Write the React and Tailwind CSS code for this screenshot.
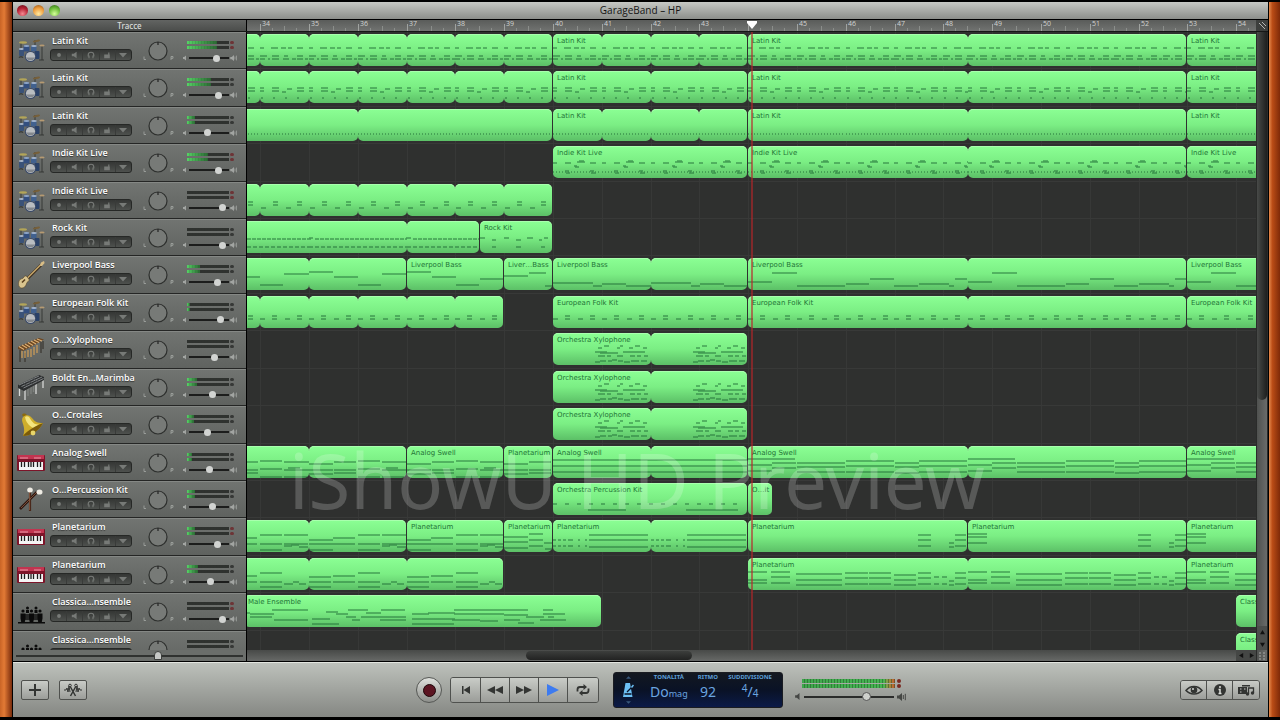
import React, { useState } from "react";
import clsx from "clsx";

const BAR_WIDTH = 48.8;
const FIRST_BAR = 33.73;
const PLAYHEAD = 44.07;

const xOf = (bar) => Math.round((bar - FIRST_BAR) * BAR_WIDTH);

const every = (step, total, y, w, from = 0) => {
  const out = [];
  for (let x = from; x < total; x += step) out.push([x, y, w]);
  return out;
};

const stack = (x, w, ys) => ys.map((y) => [x, y, w]);

// notes are [x, y, width]; a pattern repeats after `period` bars
const PATTERNS = {
  latinA: {
    period: 1,
    notes: [
      [0, 14, 4], [11, 14, 7], [21, 14, 5], [28, 14, 4], [37, 14, 6],
      [0, 22, 7], [12, 22, 7], [24, 22, 4], [37, 22, 6],
      [0, 25, 5], [8, 25, 2], [12, 25, 7], [23, 25, 6], [32, 25, 4], [37, 25, 6], [45, 25, 3],
    ],
  },
  latinB: {
    period: 1,
    notes: [
      ...stack(0, 4, [17, 20]),
      ...stack(12, 7, [17, 20]),
      [22, 21, 4],
      [27, 18, 5],
      ...stack(37, 7, [17, 20]),
      ...every(12, 48, 27, 2, 1),
    ],
  },
  latinC: { period: 1, notes: every(3, 48, 25, 1) },
  indie: {
    period: 1,
    notes: [
      [0, 17, 4], [12, 17, 6], [37, 17, 6], [24, 16, 8], [26, 15, 5],
      [21, 20, 3], [22, 21, 4],
      ...every(3, 48, 26, 1),
      [12, 25, 4], [13, 27, 4], [37, 25, 4], [38, 27, 5],
    ],
  },
  indieB: { period: 1, notes: [[1, 24, 5], ...stack(13, 5, [18, 21]), [26, 24, 5], ...stack(37, 5, [18, 21])] },
  folk: { period: 1, notes: [[0, 23, 5], ...stack(12, 5, [20, 23]), [25, 23, 5], ...stack(37, 5, [20, 23])] },
  rock: { period: 2, notes: [[0, 17, 4], ...every(5, 97, 18, 4, 6), ...every(6, 97, 26, 4)] },
  rockFill: {
    period: 1.5,
    notes: [[0, 17, 5], [12, 19, 4], [24, 17, 5], [36, 19, 5], [47, 17, 6], [59, 19, 3], [64, 17, 4], [12, 26, 4], [36, 26, 5], [61, 26, 4]],
  },
  bass: { period: 2, notes: [[0, 14, 24], [25, 19, 24], [49, 27, 23], [73, 16, 25]] },
  bassTurn: { period: 2, notes: [[0, 14, 24], [25, 19, 24], [49, 27, 23], [73, 21, 25]] },
  bassEnd: { period: 1, notes: [[0, 18, 24], [25, 15, 17], [41, 28, 7]] },
  bassLow: { period: 2, notes: [[0, 25, 40], [40, 28, 9], [49, 26, 24], [73, 28, 25]] },
  bassLong: {
    period: 4.5,
    notes: [
      [0, 24, 24], [24, 15, 25], [49, 28, 48], [98, 26, 23], [122, 21, 24],
      [146, 28, 24], [171, 26, 30], [201, 28, 5], [207, 21, 12],
    ],
  },
  xylo: {
    period: 2,
    notes: [
      [45, 15, 4], [51, 13, 5], [64, 15, 3], [67, 13, 3], [76, 15, 4], [82, 13, 5], [90, 15, 4],
      [42, 19, 12], [47, 20, 18], [70, 19, 22],
      [45, 23, 7], [54, 23, 4], [64, 23, 6], [77, 23, 5], [84, 23, 4], [91, 23, 4],
      [42, 29, 5], [47, 28, 6], [55, 28, 4], [59, 27, 5], [65, 28, 5], [71, 29, 6], [78, 28, 8], [88, 28, 6],
    ],
  },
  swell: {
    period: 2,
    notes: [
      ...stack(0, 24, [18, 24, 28]),
      ...stack(25, 22, [16, 24, 27]),
      ...stack(49, 22, [15, 23, 31]),
      ...stack(73, 25, [16, 24, 31]),
      [77, 22, 12],
    ],
  },
  swellFull: { period: 2, notes: stack(0, 98, [14, 20, 26]) },
  swellLong: {
    period: 4.5,
    notes: [
      ...stack(0, 47, [13]), ...stack(0, 24, [19, 25]), ...stack(24, 24, [17, 22]),
      ...stack(49, 48, [17, 21, 26]), ...stack(98, 48, [15, 20, 26]), ...stack(147, 24, [17, 21, 27]),
      ...stack(171, 48, [15, 20, 26]),
    ],
  },
  perc: { period: 4.5, notes: [...every(12, 190, 21, 4), [35, 27, 38], [133, 27, 52]] },
  planet: {
    period: 2,
    notes: [
      ...stack(0, 24, [20, 24, 30]),
      ...stack(24, 22, [18, 24]),
      ...stack(49, 22, [15, 24, 30]),
      ...stack(73, 24, [15, 24]),
      [73, 26, 8], [80, 25, 8], [88, 27, 9],
    ],
  },
  planetB: {
    period: 2,
    notes: [
      ...stack(0, 22, [19, 24, 29]),
      ...stack(24, 22, [18, 24]),
      ...stack(49, 22, [15, 24, 29]),
      [73, 26, 9], [82, 24, 6], [88, 26, 7],
    ],
  },
  planetShort: { period: 1, notes: [...stack(0, 24, [17, 22, 28]), ...stack(25, 14, [14, 20, 26]), [40, 23, 8], [41, 29, 7]] },
  planetDots: {
    period: 2,
    notes: [...every(5, 16, 20, 3), ...every(7, 34, 20, 2, 18), ...every(5, 16, 26, 3), ...every(7, 34, 26, 2, 18), ...stack(36, 59, [15, 20, 27])],
  },
  planetTail: { period: 4.5, notes: [...stack(170, 13, [15, 20, 26]), ...stack(201, 5, [23, 27]), ...stack(207, 11, [15, 20, 26])] },
  planetHeadTail: {
    period: 4.5,
    notes: [...stack(0, 19, [14, 17, 23]), ...stack(170, 13, [15, 20, 26]), ...stack(201, 5, [23, 27]), ...stack(207, 11, [15, 20, 26])],
  },
  planetLong: {
    period: 4.5,
    notes: [
      ...stack(0, 19, [14, 22, 25]), ...stack(23, 19, [14, 19, 25]), ...stack(48, 46, [16, 22, 27]),
      ...stack(97, 23, [15, 20, 26]), ...stack(121, 22, [15, 20, 26]), ...stack(146, 22, [17, 22, 27]),
      ...stack(170, 13, [15, 20, 26]), ...stack(186, 5, [19, 26]), ...stack(194, 5, [19, 26]),
      ...stack(201, 5, [23, 27]), ...stack(207, 11, [15, 20, 26]),
    ],
  },
  male: {
    period: 8,
    notes: [
      [0, 18, 6], [6, 19, 24], [28, 15, 36], [6, 22, 22], [30, 25, 34],
      [68, 29, 27], [68, 24, 18], [82, 17, 12], [92, 19, 12], [104, 15, 20], [102, 22, 10], [108, 25, 8],
      [117, 22, 20], [122, 18, 15], [137, 15, 24], [136, 22, 26], [136, 25, 26],
      [168, 19, 17], [184, 18, 27], [168, 24, 43], [168, 29, 42],
      [210, 15, 74], [210, 19, 50], [208, 25, 28], [236, 26, 18], [260, 20, 24], [260, 25, 16], [274, 28, 16],
      [282, 22, 18], [299, 15, 10], [299, 19, 22], [296, 25, 26], [304, 22, 6],
    ],
  },
  blank: { period: 1, notes: [] },
};

const r = (start, end, loop, pattern, label) => ({ start, end, loop, pattern, label });

const drumLane = (label, pattern, midLoop) => [
  r(32, 40, pattern === "latinC" ? 4 : 1, pattern, ""),
  r(40, 44, midLoop, pattern, label),
  r(44, 53, 4.5, pattern, label),
  r(53, 56, 3, pattern, label),
];

const TRACKS = [
  { name: "Latin Kit", icon: "drums", volume: 74, level: 72, clip: true, regions: drumLane("Latin Kit", "latinA", 1) },
  { name: "Latin Kit", icon: "drums", volume: 80, level: 56, regions: drumLane("Latin Kit", "latinB", 2) },
  { name: "Latin Kit", icon: "drums", volume: 46, level: 20, regions: drumLane("Latin Kit", "latinC", 1) },
  { name: "Indie Kit Live", icon: "drums", volume: 80, level: 50, clip: true, regions: drumLane("Indie Kit Live", "indie", 4).slice(1) },
  { name: "Indie Kit Live", icon: "drums", volume: 92, level: 0, clip: true, regions: [r(32, 40, 1, "indieB", "")] },
  {
    name: "Rock Kit", icon: "drums", volume: 92, level: 0,
    regions: [r(33, 38.5, 4, "rock", ""), r(38.5, 40, 2, "rockFill", "Rock Kit")],
  },
  {
    name: "Liverpool Bass", icon: "bass", volume: 77, level: 32,
    regions: [
      r(33, 37, 2, "bass", ""),
      r(37, 39, 2, "bassTurn", "Liverpool Bass"),
      r(39, 40, 1, "bassEnd", "Liver…Bass"),
      r(40, 44, 2, "bassLow", "Liverpool Bass"),
      r(44, 53, 4.5, "bassLong", "Liverpool Bass"),
      r(53, 56, 3, "bassLong", "Liverpool Bass"),
    ],
  },
  {
    name: "European Folk Kit", icon: "drums", volume: 86, level: 8,
    regions: [
      r(32, 39, 1, "folk", ""),
      r(40, 44, 4, "folk", "European Folk Kit"),
      r(44, 53, 4.5, "folk", "European Folk Kit"),
      r(53, 56, 3, "folk", "European Folk Kit"),
    ],
  },
  { name: "O…Xylophone", icon: "xylophone", volume: 68, level: 0, regions: [r(40, 44, 2, "xylo", "Orchestra Xylophone")] },
  { name: "Boldt En…Marimba", icon: "marimba", volume: 60, level: 24, regions: [r(40, 44, 2, "xylo", "Orchestra Xylophone")] },
  { name: "O…Crotales", icon: "bell", volume: 46, level: 16, regions: [r(40, 44, 2, "xylo", "Orchestra Xylophone")] },
  {
    name: "Analog Swell", icon: "keys", volume: 53, level: 12,
    regions: [
      r(33, 37, 2, "swell", ""),
      r(37, 39, 2, "swell", "Analog Swell"),
      r(39, 40, 1, "swell", "Planetarium"),
      r(40, 44, 2, "swellFull", "Analog Swell"),
      r(44, 53, 4.5, "swellLong", "Analog Swell"),
      r(53, 56, 3, "swellLong", "Analog Swell"),
    ],
  },
  {
    name: "O…Percussion Kit", icon: "mallets", volume: 60, level: 18,
    regions: [r(40, 44, 4, "perc", "Orchestra Percussion Kit"), r(44, 44.5, 1, "blank", "O…it")],
  },
  {
    name: "Planetarium", icon: "keys", volume: 77, level: 20, clip: true,
    regions: [
      r(33, 37, 2, "planet", ""),
      r(37, 39, 2, "planet", "Planetarium"),
      r(39, 40, 1, "planetShort", "Planetarium"),
      r(40, 44, 2, "planetDots", "Planetarium"),
      r(44, 48.5, 4.5, "planetTail", "Planetarium"),
      r(48.5, 53, 4.5, "planetHeadTail", "Planetarium"),
      r(53, 56, 3, "planetHeadTail", "Planetarium"),
    ],
  },
  {
    name: "Planetarium", icon: "keys", volume: 56, level: 26,
    regions: [r(33, 39, 2, "planetB", ""), r(44, 53, 4.5, "planetLong", "Planetarium"), r(53, 56, 3, "planetLong", "Planetarium")],
  },
  {
    name: "Classica…nsemble", icon: "choir", volume: 92, level: 0, clip: true,
    regions: [r(33.67, 41, 8, "male", "Male Ensemble"), r(54, 56, 2, "blank", "Classical Ensemble")],
  },
  { name: "Classica…nsemble", icon: "choir", volume: 92, level: 0, regions: [r(54, 56, 2, "blank", "Classical Ensemble")] },
];

const TrackIcon = ({ type }) => {
  switch (type) {
    case "bass":
      return (
        <svg viewBox="0 0 28 28" className="w-7 h-7">
          <path d="M9 19 24 4" stroke="#3b2c1c" strokeWidth="3" />
          <path d="M9 18.5 24.5 3" stroke="#c9a96c" strokeWidth="1.4" />
          <path d="M23 5l1-3.5 3-1.5.6 2-2.6 3z" fill="#d8bd86" />
          <path d="M2 20c1-3 4-1.500 5-4 1-2 3-1 3.500.5s2 1 1.500 3c-.6 1.500-2 1-2.500 3-.6 3-3 5-5.500 4.500S1 23 2 20z" fill="#d9c48e" stroke="#5b4626" strokeWidth=".6" />
          <path d="M5 21.500l3-3" stroke="#5a3e1c" strokeWidth="1.600" />
        </svg>
      );
    case "xylophone":
      return (
        <svg viewBox="0 0 28 28" className="w-7 h-7">
          <path d="M3 14v12M8 17v9M24 6v11M26 5v8" stroke="#3d3a34" strokeWidth="1.300" />
          <path d="M5 15v7M8 15v7M11 14v7M14 13v8M17 11v8M20 9v8" stroke="#c99a58" strokeWidth="1.300" />
          <path d="M1 11 22 2l5 1.500L6 15l-5-2z" fill="#6d4722" />
          <path d="M2 10.500l5 3M5 9l5 3M8 8l5 3M11 6.500l5 3M14 5l5 3M17 4l5 2.500M20 3l5 2" stroke="#dcb074" strokeWidth="1.100" />
        </svg>
      );
    case "marimba":
      return (
        <svg viewBox="0 0 28 28" className="w-7 h-7">
          <path d="M2.500 13v9M8 16v10M19 10v10M26 5v9" stroke="#d6d8d6" strokeWidth="1.300" />
          <path d="M11 14v8M14 13v7M16.500 11v7" stroke="#7f827f" strokeWidth="1.300" />
          <path d="M1 11 22 1l5 2v3L7 17l-6-3z" fill="#2c2e2f" />
          <path d="M2 11 22 2M4.500 12.500 25 3M6.500 14 26.500 4.500" stroke="#94989a" strokeWidth=".8" />
          <path d="M6 9l5 3M11 7l5 3M16 4.500l5 3" stroke="#4a4d4f" strokeWidth="1" />
        </svg>
      );
    case "bell":
      return (
        <svg viewBox="0 0 28 28" className="w-7 h-7">
          <path d="M5 4c1-2 4-2 5 .5l-3 2z" fill="#8a6a10" />
          <path d="M6 6c3-3 7-2 9 1 3 4 5 5 11 5-3 7-12 13-20 13 2-5 1-9 0-12-1-3-1.500-5 0-7z" fill="#cfae2b" />
          <path d="M8 6c2-1.500 4-.5 5 1.500 3 5 5 6 9 6l-5 4C11 14 9 11 8 6z" fill="#f3e47e" />
          <path d="M6 25c8 0 17-6 20-13-4 1-17 8-20 13z" fill="#7a5a0a" />
          <circle cx="16" cy="22" r="2.400" fill="#e8d56a" />
        </svg>
      );
    case "keys":
      return (
        <svg viewBox="0 0 28 28" className="w-7 h-7">
          <rect x="0" y="6" width="28" height="16" rx="1" fill="#7d1429" />
          <rect x="1" y="6" width="26" height="4" fill="#c23450" />
          <path d="M3 9h8M17 9h7" stroke="#e79aa8" strokeWidth="1" />
          <rect x="2" y="13" width="24" height="8" fill="#f4f4f4" />
          <path d="M4.500 13v5M7.500 13v5M11.500 13v5M14 13v5M16.500 13v5M20.500 13v5M23.500 13v5" stroke="#1c1c1c" strokeWidth="1.300" />
        </svg>
      );
    case "mallets":
      return (
        <svg viewBox="0 0 28 28" className="w-7 h-7">
          <path d="M3 23 20 6" stroke="#2e1710" strokeWidth="2.600" />
          <path d="M13 5v20" stroke="#4a281b" strokeWidth="2.200" />
          <path d="M4 22 20 6M12.500 6v18" stroke="#8b5a41" strokeWidth=".8" />
          <ellipse cx="13" cy="4" rx="2.800" ry="2.500" fill="#efece4" />
          <ellipse cx="22.500" cy="6" rx="3" ry="2.600" fill="#efece4" />
        </svg>
      );
    case "choir":
      return (
        <svg viewBox="0 0 28 28" className="w-7 h-7" fill="#0b0b0b">
          <circle cx="10.500" cy="10" r="1.500" />
          <circle cx="19" cy="10" r="1.500" />
          <circle cx="6" cy="13" r="1.600" />
          <circle cx="14.500" cy="13" r="1.600" />
          <circle cx="23" cy="13" r="1.600" />
          <path d="M9 12h3v3H9zM17.500 12h3v3h-3z" />
          <path d="M3.500 15.500h5v5l-.8 4H4.300l-.8-4zM12 15.500h5v5l-.8 4h-3.400l-.8-4zM20.500 15.500h5v5l-.8 4h-3.400l-.8-4z" />
          <path d="M8 16h5v6H8zM16 16h5v6h-5z" opacity=".7" />
          <path d="M1 24h27v1.500H1z" />
        </svg>
      );
    default:
      return (
        <svg viewBox="0 0 28 28" className="w-7 h-7">
          <path d="M4 6v15M25 9v14M18 3v7M22 23h5M2 21l2-3 2 3" stroke="#2c2d2c" strokeWidth=".8" fill="none" />
          <ellipse cx="6" cy="5.500" rx="4" ry="1.200" fill="#b3a558" />
          <ellipse cx="19.500" cy="4" rx="3.600" ry="1.100" fill="#77603a" transform="rotate(-12 19.500 4)" />
          <ellipse cx="25" cy="8.500" rx="2.600" ry=".9" fill="#b59a72" />
          <rect x="2" y="12" width="5" height="7" rx="1" fill="#3a5278" />
          <ellipse cx="4.500" cy="12" rx="2.700" ry="1.100" fill="#a9b6c8" />
          <rect x="6.500" y="9" width="6" height="5.500" rx="1" fill="#334f80" />
          <ellipse cx="9.500" cy="9" rx="2.800" ry="1" fill="#8fa6c9" />
          <rect x="14" y="9" width="5.500" height="5.500" rx="1" fill="#41618f" />
          <ellipse cx="17" cy="9" rx="2.800" ry="1" fill="#a3b5d0" />
          <rect x="17.500" y="14" width="5" height="8" rx="1" fill="#2a4168" />
          <circle cx="13.500" cy="19.500" r="5.600" fill="#3a4a68" />
          <circle cx="13.500" cy="19.500" r="4.600" fill="#b9bdc1" />
          <path d="M9 20.500a5 5 0 0 0 9 0z" fill="#83888e" />
        </svg>
      );
  }
};

const SpeakerIcon = ({ loud, className }) => (
  <svg viewBox="0 0 10 8" className={className} fill="currentColor">
    <path d="M0 2.500h2L5 0v8L2 5.500H0z" />
    {loud && <path d="M6.300 2v4M8.300 .8v6.400" stroke="currentColor" strokeWidth="1" />}
  </svg>
);

const STRIP_ICONS = [
  { label: "Record", path: <circle cx="5" cy="5" r="2.400" /> },
  { label: "Mute", path: <path d="M1 3.500h2.500L7 1v8L3.500 6.500H1z" /> },
  {
    label: "Solo",
    path: <path d="M1.500 7V5a3.500 3.500 0 0 1 7 0v2M2.500 5.500v3.500M7.500 5.500v3.500" fill="none" stroke="currentColor" strokeWidth="1.400" />,
  },
  { label: "Lock", path: <path d="M1.500 4.500h5V2h1.500v2.500h.5V9h-7z" /> },
  { label: "Automation", path: <path d="M0 2.500h10L5 8z" /> },
];

const Meter = ({ level, clip }) => (
  <div className="flex items-center gap-px h-[3px]">
    <div className="relative flex-1 h-full bg-[#2f322f] overflow-hidden">
      <div className="h-full bg-linear-to-r from-[#55d465] to-[#2b6a33]" style={{ width: `${level}%` }} />
      <div className="absolute inset-0 bg-[repeating-linear-gradient(90deg,transparent_0_2px,#2b2e2b22_2px_3px)]" />
    </div>
    <div className={clsx("w-1 h-full rounded-full", clip ? "bg-[#6d3436]" : "bg-[#363836]")} />
  </div>
);

const TrackHeader = ({ track }) => {
  const [volume, setVolume] = useState(track.volume);

  return (
    <li className="flex items-start min-h-0 overflow-hidden pl-1 pr-2 bg-linear-to-b from-[#717471] to-[#5f625f] border-t border-[#858885] shadow-[inset_0_-1px_0_#252625]">
      <div className="shrink-0 pt-1">
        <TrackIcon type={track.icon} />
      </div>
      <div className="w-[82px] ml-[5px] shrink-0 pt-[2px]">
        <p className="pl-[2px] text-[9px] leading-3 font-semibold text-white whitespace-nowrap [text-shadow:0_1px_1px_#0008]">
          {track.name}
        </p>
        <div className="flex mt-[2px] h-3 rounded-[3px] border border-[#262826] bg-linear-to-b from-[#343634] to-[#4e514e]">
          {STRIP_ICONS.map((item) => (
            <button key={item.label} type="button" aria-label={item.label} className="flex-1 flex items-center justify-center text-[#777a77] border-r border-[#393b39] last:border-r-0">
              <svg viewBox="0 0 10 10" className="w-2 h-2" fill="currentColor">
                {item.path}
              </svg>
            </button>
          ))}
        </div>
      </div>
      <button type="button" aria-label={`${track.name} pan`} className="shrink-0 ml-[9px] mt-[7px]">
        <svg viewBox="0 0 34 24" className="w-[34px] h-6">
          <circle cx="17" cy="11" r="9" fill="#777a77" stroke="#2e302e" strokeWidth="1.200" />
          <path d="M17 2v3" stroke="#222" strokeWidth="1.200" />
          <path d="M3 16.500v3h2" stroke="#a5a8a5" strokeWidth=".8" fill="none" />
          <path d="M30 20v-3.500h2v1.800h-2" stroke="#a5a8a5" strokeWidth=".8" fill="none" />
        </svg>
      </button>
      <div className="flex-1 min-w-0 ml-2 pt-2">
        <div className="flex flex-col gap-[2px] pl-1 pr-1">
          <Meter level={track.level} clip={track.clip} />
          <Meter level={track.level} clip={track.clip} />
        </div>
        <div className="flex items-center mt-[5px] text-[#a2a5a2]">
          <SpeakerIcon className="w-[6px] h-[6px] shrink-0" />
          <input
            type="range"
            aria-label={`${track.name} volume`}
            value={volume}
            onChange={(e) => setVolume(Number(e.target.value))}
            className="flex-1 min-w-0 h-2 appearance-none bg-transparent bg-[linear-gradient(#1c1d1c,#1c1d1c)] bg-[length:100%_2px] bg-center bg-no-repeat [&::-webkit-slider-thumb]:appearance-none [&::-webkit-slider-thumb]:w-[7px] [&::-webkit-slider-thumb]:h-[7px] [&::-webkit-slider-thumb]:rounded-full [&::-webkit-slider-thumb]:bg-[#d2d4d2]"
          />
          <SpeakerIcon loud className="w-2 h-[6px] ml-px shrink-0" />
        </div>
      </div>
    </li>
  );
};

const notePath = ({ period, notes }, width) => {
  const step = period * BAR_WIDTH;
  let d = "";
  for (let x0 = 0; x0 < width; x0 += step) {
    notes.forEach(([x, y, w]) => {
      if (x0 + x < width) d += `M${Math.round(x0 + x)} ${y}h${w}`;
    });
  }
  return d;
};

const Region = ({ region }) => {
  const left = xOf(region.start);
  const width = xOf(region.end) - left - 1;
  const segments = [];
  for (let bar = region.start; bar < region.end; bar += region.loop) {
    const x = xOf(bar) - left;
    segments.push({ x, w: Math.min(xOf(bar + region.loop) - left, width) - x });
  }

  return (
    <div className="absolute top-[2px] h-8 overflow-hidden" style={{ left, width }}>
      <div className="flex h-full">
        {segments.map((seg) => (
          <div
            key={seg.x}
            className="h-full shrink-0 rounded-[5px] overflow-hidden bg-linear-to-b from-[#8bff94] via-[#7bee84] to-[#5cc067] shadow-[inset_0_1px_0_#a9ffae]"
            style={{ width: seg.w }}
          >
            <svg width={seg.w} height="32" className="block">
              <path d={notePath(PATTERNS[region.pattern], seg.w)} stroke="#1f6a35" strokeOpacity=".6" strokeWidth="1.300" />
            </svg>
          </div>
        ))}
      </div>
      <span className="absolute left-1 top-[2px] font-['DejaVu_Sans',sans-serif] text-[7px] leading-[10px] text-[#237437] whitespace-nowrap">
        {region.label}
      </span>
    </div>
  );
};

const BARS = Array.from({ length: 21 }, (_, i) => 34 + i);

const Ruler = () => (
  <div className="relative flex-1 overflow-hidden bg-linear-to-b from-[#5a5c5a] to-[#717371]">
    {BARS.map((bar) => (
      <div key={bar} className="absolute inset-y-0" style={{ left: xOf(bar) }}>
        {Math.floor(PLAYHEAD) !== bar && (
          <span className="absolute left-[2px] -top-px text-[7px] leading-[10px] text-[#d2d4d2]">{bar}</span>
        )}
        <svg width="49" height="12" className="block">
          <path d="M.5 4v8" stroke="#a0a3a0" />
          <path d="M12.500 8v4M24.500 6v6M36.500 8v4" stroke="#8b8e8b" />
        </svg>
      </div>
    ))}
    <svg viewBox="0 0 12 8" className="absolute top-px w-3 h-2 -translate-x-1/2" style={{ left: xOf(PLAYHEAD) }}>
      <path d="M1 0h10v2L6 8 1 2z" fill="#fff" />
    </svg>
  </div>
);

const Timeline = () => (
  <div className="flex-1 min-w-0 flex flex-col">
    <div className="relative flex-1 min-h-0 overflow-hidden bg-[#2f302f]">
      {BARS.map((bar) => (
        <div key={bar} className="absolute inset-y-0 w-px bg-[#373837]" style={{ left: xOf(bar) }} />
      ))}
      <div className="h-[636px] grid auto-rows-fr">
        {TRACKS.map((track, i) => (
          <div key={i} className="relative border-b border-[#383938]">
            {track.regions.map((region) => (
              <Region key={region.start} region={region} />
            ))}
          </div>
        ))}
      </div>
      <div className="absolute inset-y-0 w-[2px] -translate-x-1/2 bg-[#b8242a]/60" style={{ left: xOf(PLAYHEAD) }} />
      <p className="absolute left-[42px] top-[398px] font-['Noto_Sans',sans-serif] text-[76px] leading-[100px] text-white/20 whitespace-nowrap pointer-events-none">
        iShowU HD Preview
      </p>
    </div>
    <div className="flex h-[11px] bg-linear-to-b from-[#484a48] to-[#676967]">
      <div className="flex-1 flex items-center px-1">
        <div className="w-[28%]" />
        <div className="w-[17%] h-[9px] rounded-full bg-linear-to-b from-[#3c3e3c] to-[#222322]" />
      </div>
      <button type="button" aria-label="Scroll left" className="w-[10px] flex items-center justify-center bg-[#454745]">
        <svg viewBox="0 0 6 6" className="w-[5px] h-[5px]"><path d="M5 0v6L0 3z" fill="#111" /></svg>
      </button>
      <button type="button" aria-label="Scroll right" className="w-[10px] flex items-center justify-center bg-[#454745]">
        <svg viewBox="0 0 6 6" className="w-[5px] h-[5px]"><path d="M1 0v6l5-3z" fill="#111" /></svg>
      </button>
    </div>
  </div>
);

const VerticalScroll = () => (
  <div className="w-3 flex flex-col border-x border-[#2a2b2a] bg-linear-to-r from-[#4f514f] to-[#6a6c6a]">
    <div className="flex-1">
      <div className="h-[62%] rounded-b-full bg-linear-to-r from-[#484a48] via-[#333533] to-[#1e1f1e]" />
    </div>
    <button type="button" aria-label="Scroll up" className="h-3 flex items-center justify-center bg-[#4c4e4c]">
      <svg viewBox="0 0 6 6" className="w-[5px] h-[5px]"><path d="M0 5h6L3 0z" fill="#111" /></svg>
    </button>
    <button type="button" aria-label="Scroll down" className="h-3 flex items-center justify-center bg-[#4c4e4c]">
      <svg viewBox="0 0 6 6" className="w-[5px] h-[5px]"><path d="M0 1h6L3 6z" fill="#111" /></svg>
    </button>
    <svg viewBox="0 0 10 11" className="w-[10px] h-[11px]">
      <path d="M2 3h2M6 3h2M2 6h2M6 6h2M2 9h2M6 9h2" stroke="#aaaca9" />
    </svg>
  </div>
);

const BarButton = ({ label, children, className }) => (
  <button
    type="button"
    aria-label={label}
    className={clsx(
      "flex items-center justify-center bg-linear-to-b from-[#c9ccc7] to-[#9b9d99] text-[#333533] border-[#4f514e]",
      className
    )}
  >
    {children}
  </button>
);

const MasterMeter = () => (
  <div className="flex items-center gap-[2px] h-1">
    <div className="relative flex-1 h-full bg-linear-to-r from-[#3fa64c] via-[#45b552] via-88% to-[#c8552c]">
      <div className="absolute inset-0 bg-[repeating-linear-gradient(90deg,transparent_0_2px,#1e4a2277_2px_3px)]" />
    </div>
    <div className="w-1 h-full rounded-full bg-[#7a2a22]" />
  </div>
);

const Toolbar = () => {
  const [master, setMaster] = useState(71);

  return (
    <footer className="h-[55px] shrink-0 grid grid-cols-[1fr_auto_1fr] items-center px-2 border-t border-[#e2e5df] bg-linear-to-b from-[#bdc1bb] to-[#858783]">
      <div className="flex gap-[10px]">
        <BarButton label="New track" className="w-7 h-5 border rounded-[2px]">
          <svg viewBox="0 0 12 12" className="w-3 h-3"><path d="M6 0v12M0 6h12" stroke="currentColor" strokeWidth="2" /></svg>
        </BarButton>
        <BarButton label="Track editor" className="w-7 h-5 border rounded-[2px]">
          <svg viewBox="0 0 20 14" className="w-5 h-[14px]" fill="none" stroke="currentColor">
            <path d="M1 7h2l1-2 1 4 1-6 1 6M19 7h-2l-1-2-1 4-1-6-1 6" />
            <path d="M7.500 4 12.500 13M12.500 4 7.500 13" strokeWidth="1.500" />
            <circle cx="7" cy="2.500" r="1.300" />
            <circle cx="13" cy="2.500" r="1.300" />
          </svg>
        </BarButton>
      </div>

      <div className="flex items-center ml-[42px]">
        <button
          type="button"
          aria-label="Record"
          className="w-[26px] h-[26px] rounded-full border border-[#565855] bg-linear-to-b from-[#e0e2de] to-[#8d8f8b] flex items-center justify-center"
        >
          <span className="w-[13px] h-[13px] rounded-full border border-[#1d0609] bg-[#5c1522]" />
        </button>
        <div className="flex ml-2 border border-[#4f514e] rounded-[3px] overflow-hidden">
          <BarButton label="Go to start" className="w-[30px] h-6 border-r">
            <svg viewBox="0 0 16 10" className="w-4 h-[10px]" fill="currentColor"><path d="M4 1h1.500v8H4zM12 1v8L5.500 5z" /></svg>
          </BarButton>
          <BarButton label="Rewind" className="w-[29px] h-6 border-r">
            <svg viewBox="0 0 16 10" className="w-4 h-[10px]" fill="currentColor"><path d="M8 1v8L0 5zM16 1v8L8 5z" /></svg>
          </BarButton>
          <BarButton label="Fast forward" className="w-[29px] h-6 border-r">
            <svg viewBox="0 0 16 10" className="w-4 h-[10px]" fill="currentColor"><path d="M0 1v8l8-4zM8 1v8l8-4z" /></svg>
          </BarButton>
          <BarButton label="Play" className="w-[29px] h-6 border-r">
            <svg viewBox="0 0 12 12" className="w-3 h-3"><path d="M0 0v12l12-6z" fill="#3d7bf0" /></svg>
          </BarButton>
          <BarButton label="Cycle" className="w-[30px] h-6">
            <svg viewBox="0 0 16 14" className="w-4 h-[14px]" fill="none" stroke="currentColor" strokeWidth="1.800">
              <path d="M2.500 8.500V6.500a2.500 2.500 0 0 1 2.500-2.500h4M13.500 5.500v2a2.500 2.500 0 0 1-2.500 2.500H7" />
              <path d="M8.500 1v6l3.500-3zM7.500 7v6L4 10z" fill="currentColor" stroke="none" />
            </svg>
          </BarButton>
        </div>

        <div className="flex ml-[14px] w-[170px] h-9 rounded-[3px] border border-[#1a1c22] bg-linear-to-b from-[#131820] via-[#0a1226] to-[#0b1a48] text-[#5d9fd8]">
          <div className="w-7 flex flex-col items-center justify-center gap-1">
            <svg viewBox="0 0 6 3" className="w-[5px] h-[3px]"><path d="M0 3h6L3 0z" fill="#39587c" /></svg>
            <svg viewBox="0 0 12 14" className="w-3 h-[14px]">
              <path d="M3.500 0h4.500l2.500 14H1z" fill="#6cc0f5" />
              <path d="M5 9 10 4M2.500 11h7" stroke="#0a1226" strokeWidth="1.300" />
              <path d="M9.500 4.500 11.500 2" stroke="#6cc0f5" strokeWidth="1.500" />
            </svg>
            <svg viewBox="0 0 6 3" className="w-[5px] h-[3px]"><path d="M0 0h6L3 3z" fill="#39587c" /></svg>
          </div>
          <dl className="flex flex-1 justify-between px-2 pr-[10px] text-center font-['Noto_Sans',sans-serif]">
            {[
              ["TONALITÀ", <>Do<span className="text-[9px]">mag</span></>],
              ["RITMO", "92"],
              ["SUDDIVISIONE", <><sup className="text-[10px] leading-none">4</sup>/<span className="text-[10px]">4</span></>],
            ].map(([title, value]) => (
              <div key={title}>
                <dt className="text-[6px] leading-[9px] font-bold">{title}</dt>
                <dd className="text-[14px] leading-[20px] text-[#6aa5e0] whitespace-nowrap">{value}</dd>
              </div>
            ))}
          </dl>
        </div>

        <div className="ml-3 w-[112px]">
          <div className="flex flex-col gap-px pl-[7px] pr-[6px]">
            <MasterMeter />
            <MasterMeter />
          </div>
          <div className="flex items-center mt-1 text-[#454744]">
            <SpeakerIcon className="w-[9px] h-[7px] shrink-0" />
            <input
              type="range"
              aria-label="Master volume"
              value={master}
              onChange={(e) => setMaster(Number(e.target.value))}
              className="flex-1 min-w-0 h-[9px] appearance-none bg-transparent bg-[linear-gradient(#2b2c2b,#2b2c2b)] bg-[length:100%_2px] bg-center bg-no-repeat [&::-webkit-slider-thumb]:appearance-none [&::-webkit-slider-thumb]:w-[9px] [&::-webkit-slider-thumb]:h-[9px] [&::-webkit-slider-thumb]:rounded-full [&::-webkit-slider-thumb]:border [&::-webkit-slider-thumb]:border-[#555] [&::-webkit-slider-thumb]:bg-[#cfd1cd]"
            />
            <SpeakerIcon loud className="w-[10px] h-2 ml-[3px] shrink-0" />
          </div>
        </div>
      </div>

      <div className="flex justify-self-end border border-[#4f514e] rounded-[3px] overflow-hidden">
        <BarButton label="Loop browser" className="w-[26px] h-[18px] border-r">
          <svg viewBox="0 0 18 12" className="w-[18px] h-3">
            <path d="M1 6.500C5 1 13 1 17 6.500 13 11 5 11 1 6.500z" fill="#b9bbb7" stroke="currentColor" strokeWidth="1.500" />
            <circle cx="9" cy="6" r="3.300" fill="currentColor" />
            <circle cx="8" cy="5" r="1" fill="#d5d7d3" />
          </svg>
        </BarButton>
        <BarButton label="Track info" className="w-[26px] h-[18px] border-r">
          <svg viewBox="0 0 12 12" className="w-3 h-3">
            <circle cx="6" cy="6" r="6" fill="currentColor" />
            <path d="M6 2v2M4.500 5.500H6v4M4.500 9.500h3" stroke="#dcdeda" strokeWidth="1.500" fill="none" />
          </svg>
        </BarButton>
        <BarButton label="Media browser" className="w-[26px] h-[18px]">
          <svg viewBox="0 0 18 12" className="w-[18px] h-3">
            <path d="M1 3h9v7H1zM5 1h8v1.500H5z" fill="currentColor" />
            <path d="M3 5h1.500M3 8h1.500M7 5h1.500" stroke="#c5c7c3" />
            <path d="M11.500 10V4h5v5" stroke="currentColor" strokeWidth="1.300" fill="none" />
            <circle cx="10.500" cy="10" r="1.700" fill="currentColor" />
            <circle cx="15.500" cy="9" r="1.700" fill="currentColor" />
          </svg>
        </BarButton>
      </div>
    </footer>
  );
};

const LIGHTS = [
  { label: "Close", color: "bg-[radial-gradient(circle_at_50%_80%,#f58a92,#b51f31_55%,#5d0f18)]" },
  { label: "Minimize", color: "bg-[radial-gradient(circle_at_50%_80%,#ffe9a0,#ee9c3c_55%,#8c4c12)]" },
  { label: "Zoom", color: "bg-[radial-gradient(circle_at_50%_80%,#d5ff9a,#6cbc38_55%,#2d6414)]" },
];

const App = () => {
  const [zoom, setZoom] = useState(63);

  return (
    <div className="h-screen flex flex-col bg-black pt-[2px] pb-[3px] overflow-hidden font-['Open_Sans',sans-serif] select-none">
      <div className="flex flex-1 min-h-0">
        <div className="w-[13px] shrink-0 border-r border-black bg-linear-to-r from-[#c96426] via-[#e27a35] via-35% to-[#7a2c0c]" />

        <main className="flex-1 min-w-0 flex flex-col">
          <header className="relative h-[18px] shrink-0 flex items-center px-1 border-b border-black bg-linear-to-b from-[#c6c8c4] to-[#8d8f8b]">
            <div className="flex gap-[5px]">
              {LIGHTS.map((light) => (
                <button key={light.label} type="button" aria-label={light.label} className={clsx("w-[11px] h-[11px] rounded-full", light.color)} />
              ))}
            </div>
            <h1 className="absolute inset-x-0 top-0 text-center text-[10px] leading-4 text-[#141414] pointer-events-none">GarageBand – HP</h1>
          </header>

          <div className="flex h-3 shrink-0 border-b border-[#161716]">
            <div className="w-[234px] shrink-0 border-r border-black bg-linear-to-b from-[#626462] to-[#4b4d4b] text-center font-['Noto_Sans',sans-serif] text-[8px] leading-[11px] font-medium text-[#d9dbd9]">
              Tracce
            </div>
            <Ruler />
            <div className="w-3 bg-[#3d3f3d]">
              <svg viewBox="0 0 12 11" className="w-3 h-[11px]"><path d="M3 3l6 6M6 2l4 4" stroke="#b4b6b4" /></svg>
            </div>
          </div>

          <div className="flex flex-1 min-h-0">
            <aside className="w-[234px] shrink-0 flex flex-col border-r border-black bg-[#5f625f]">
              <div className="flex-1 min-h-0 overflow-hidden">
                <ul className="h-[636px] grid auto-rows-fr">
                  {TRACKS.map((track, i) => (
                    <TrackHeader key={i} track={track} />
                  ))}
                </ul>
              </div>
              <div className="h-[11px] flex items-center px-[3px] bg-[#6b6e6b]">
                <input
                  type="range"
                  aria-label="Timeline zoom"
                  value={zoom}
                  onChange={(e) => setZoom(Number(e.target.value))}
                  className="w-full h-[9px] appearance-none bg-transparent bg-[linear-gradient(#303230,#303230)] bg-[length:100%_2px] bg-center bg-no-repeat [&::-webkit-slider-thumb]:appearance-none [&::-webkit-slider-thumb]:w-2 [&::-webkit-slider-thumb]:h-[9px] [&::-webkit-slider-thumb]:rounded-t-full [&::-webkit-slider-thumb]:border [&::-webkit-slider-thumb]:border-[#3c3e3c] [&::-webkit-slider-thumb]:bg-[#c6c8c6]"
                />
              </div>
            </aside>
            <Timeline />
            <VerticalScroll />
          </div>

          <div className="h-px shrink-0 bg-black" />
          <Toolbar />
        </main>

        <div className="w-3 shrink-0 border-l border-black bg-linear-to-r from-[#e58a4a] via-[#bb4d16] via-30% to-[#7f2a08]" />
      </div>
    </div>
  );
};

export default App;
